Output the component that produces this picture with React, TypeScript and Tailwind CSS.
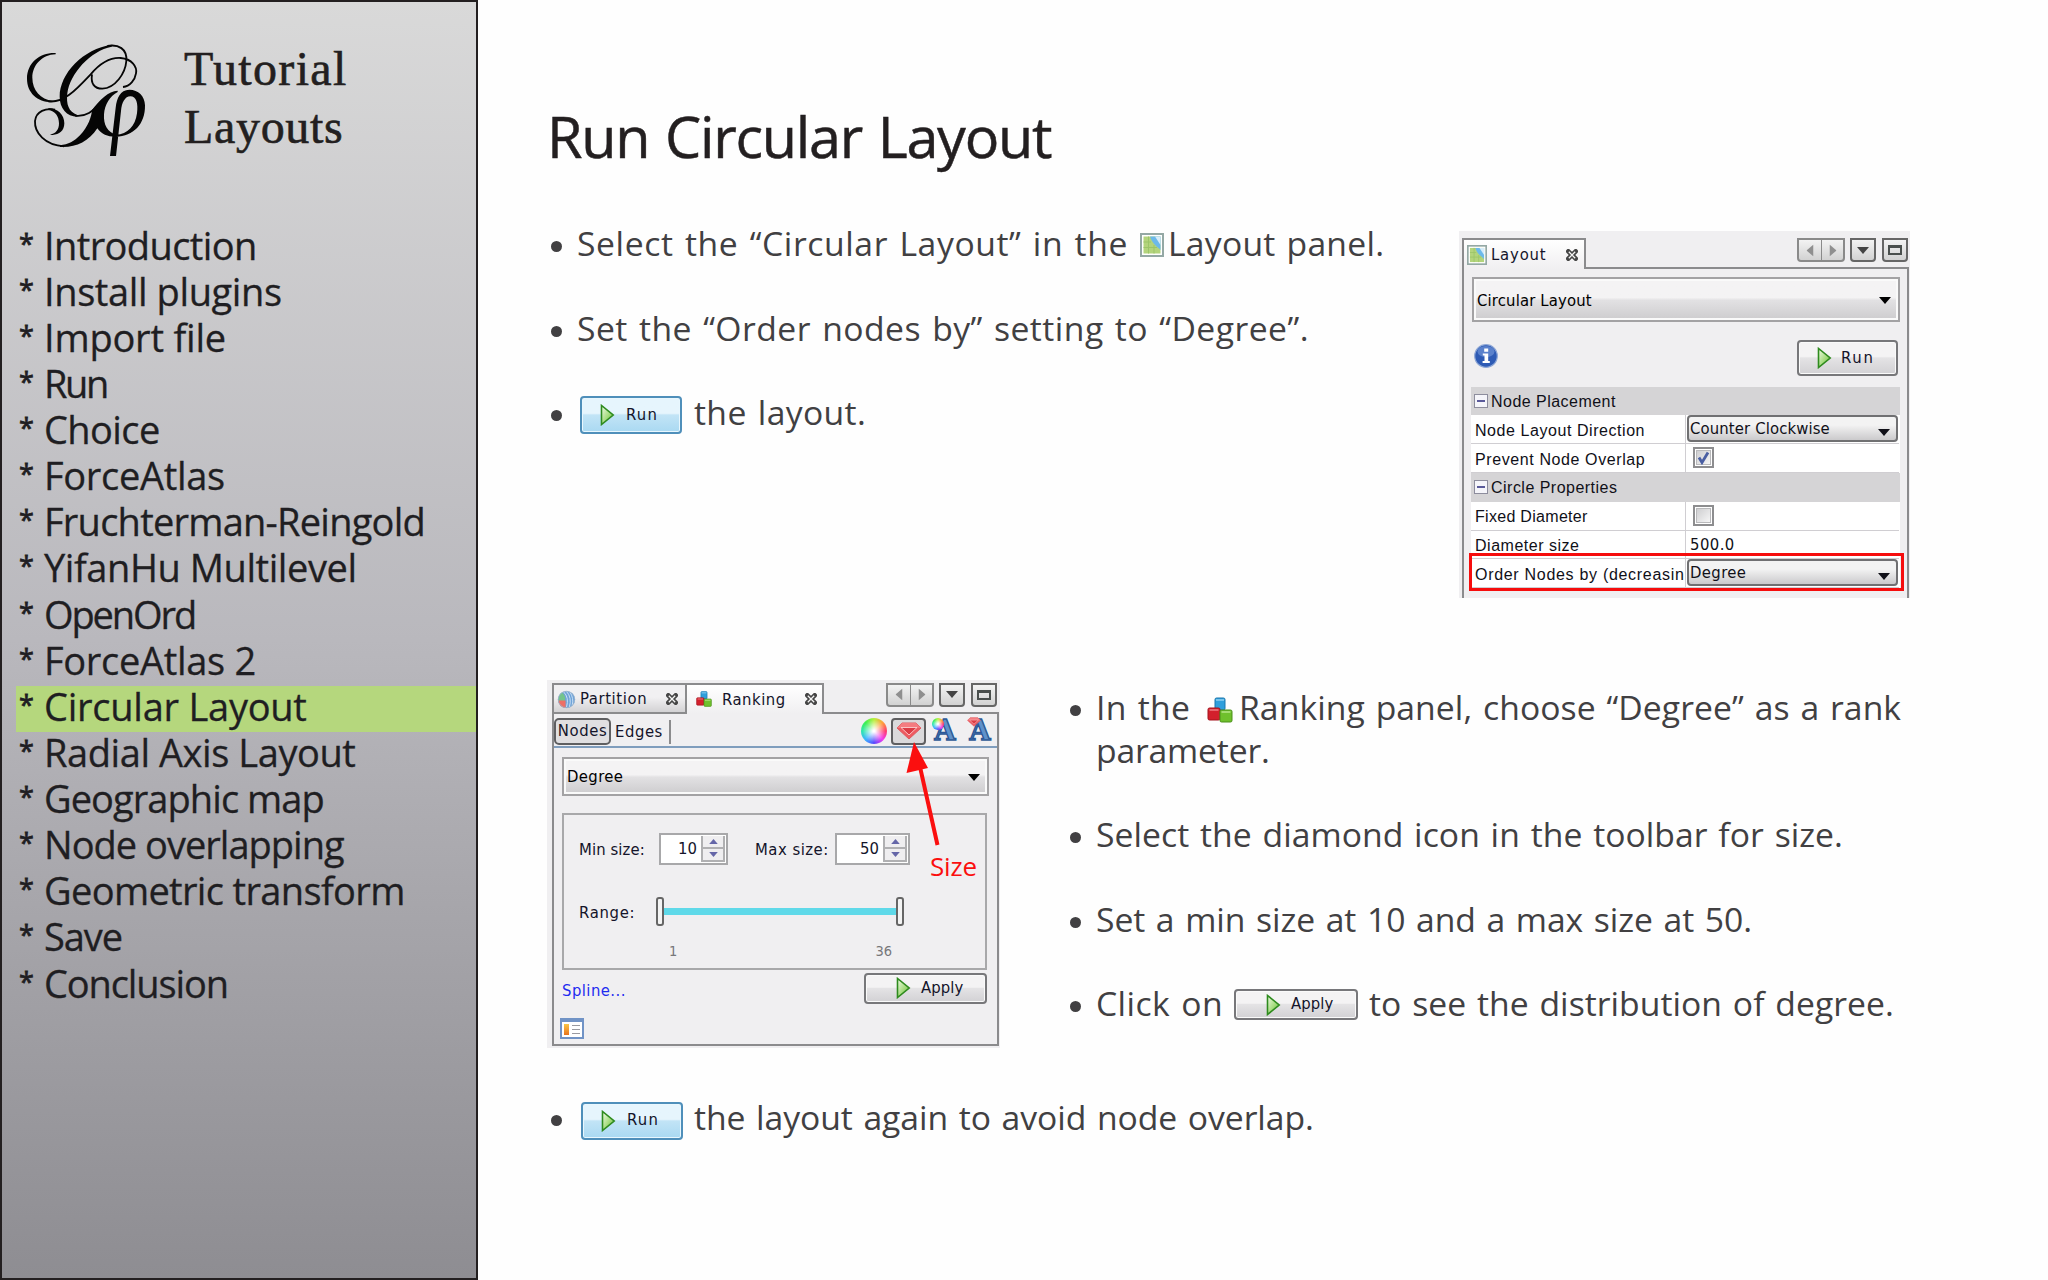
import clsx from "clsx";
import type { ReactNode } from "react";

const navItems = [
  { label: "Introduction", tracking: "tracking-[-0.6px]" },
  { label: "Install plugins", tracking: "tracking-[-0.39px]" },
  { label: "Import file", tracking: "tracking-[-0.2px]" },
  { label: "Run", tracking: "tracking-[-2.4px]" },
  { label: "Choice", tracking: "tracking-[-0.6px]" },
  { label: "ForceAtlas", tracking: "tracking-[-0.3px]" },
  { label: "Fruchterman-Reingold", tracking: "tracking-[-0.76px]" },
  { label: "YifanHu Multilevel", tracking: "tracking-[-0.43px]" },
  { label: "OpenOrd", tracking: "tracking-[-2.1px]" },
  { label: "ForceAtlas 2", tracking: "tracking-[-0.3px]" },
  { label: "Circular Layout", tracking: "tracking-[-0.25px]", active: true },
  { label: "Radial Axis Layout", tracking: "tracking-[-0.43px]" },
  { label: "Geographic map", tracking: "tracking-[-0.93px]" },
  { label: "Node overlapping", tracking: "tracking-[-0.98px]" },
  { label: "Geometric transform", tracking: "tracking-[-0.65px]" },
  { label: "Save", tracking: "tracking-[-1.1px]" },
  { label: "Conclusion", tracking: "tracking-[-1.12px]" },
];

function GephiLogo() {
  return (
    <svg viewBox="0 0 420 390" className="h-[130px] w-[140px] shrink-0">
      <g fill="#050505">
        <path d="M107 51C60 49 21 80 21 128C21 172 55 200 98 198L98 194C62 190 37 163 37 125C37 88 66 56 107 55Z" />
        <path d="M275 26C190 38 119 112 119 182C119 216 140 242 172 242L172 237C146 228 138 205 142 172C150 112 212 44 275 32Z" />
        <path d="M293 164C265 166 240 190 216 222C215 240 205 272 180 298C163 316 145 326 120 328L120 333C165 336 205 318 232 277C245 296 265 303 290 302L290 296C262 291 250 265 252 235C254 205 270 180 293 168Z" />
        <path d="M85 217C110 215 133 235 133 262C133 287 113 300 90 296C108 293 117 280 117 262C117 240 105 225 85 222Z" />
        <path d="M270 360L288 360L303 225C305 200 315 181 331 181C349 181 355 202 351 232C346 270 323 295 288 297L288 302C340 301 376 265 375 208C374 180 355 161 328 161C300 162 291 185 287 215Z" />
      </g>
      <g fill="none" stroke="#050505" strokeWidth="5.500">
        <path d="M85 196C130 202 165 165 212 115C240 82 270 64 302 66C336 69 352 92 348 112C345 132 330 151 309 153" />
        <path d="M262 30C295 24 322 38 319 75C316 112 286 156 247 158C222 158 212 142 216 115" />
        <path d="M165 239C200 243 217 226 240 203" />
        <path d="M132 331C75 328 43 290 45 255C48 225 78 215 105 221" />
      </g>
    </svg>
  );
}

function PlayIcon({ className }: { className?: string }) {
  return (
    <svg viewBox="0 0 15 22" className={clsx("h-[22px] w-[15px] shrink-0", className)}>
      <defs>
        <linearGradient id="play" x1="0" x2="1" y1="0" y2="1">
          <stop offset="0" stopColor="#f2fbe9" />
          <stop offset="0.55" stopColor="#a5dc7d" />
          <stop offset="1" stopColor="#5cb531" />
        </linearGradient>
      </defs>
      <path d="M1.5 1.5V20.5L13.2 11Z" fill="url(#play)" stroke="#2e8b1e" strokeWidth="1.6" />
    </svg>
  );
}

function MapIcon({ className }: { className?: string }) {
  return (
    <svg viewBox="0 0 24 24" className={clsx("shrink-0", className)}>
      <rect x="1" y="1" width="22" height="22" fill="#fff" stroke="#94a8a4" strokeWidth="2" />
      <rect x="3.5" y="3.5" width="17" height="17" fill="#b3d47c" />
      <path d="M10 3.5H20.5V17C18 14 12 11 10 3.5Z" fill="#6cb9ea" />
      <path d="M15 3.5H20.5V12Z" fill="#d6ecf9" />
      <path d="M3.5 9H11M3.5 14.5H17M8.5 3.5V20.5M14 12V20.5" stroke="#9cc569" fill="none" />
    </svg>
  );
}

function CubesIcon({ className }: { className?: string }) {
  return (
    <svg viewBox="0 0 26 26" className={clsx("shrink-0", className)}>
      <rect x="8" y="1" width="10" height="12" rx="1.5" fill="#2f9fdc" stroke="#1b77ad" />
      <path d="M9 3H17" stroke="#8fd0f2" strokeWidth="1.5" />
      <rect x="1" y="11" width="12" height="12" rx="1.5" fill="#d3202c" stroke="#a3131d" />
      <path d="M2.500 13H11.500" stroke="#ef7d83" strokeWidth="1.5" />
      <rect x="13" y="13" width="12" height="12" rx="1.5" fill="#6fc02c" stroke="#4a8f19" />
      <path d="M14.500 15H23.500" stroke="#b6e487" strokeWidth="1.5" />
    </svg>
  );
}

function PartitionIcon() {
  return (
    <svg viewBox="0 0 20 20" className="size-[19px] shrink-0">
      <circle cx="10" cy="10" r="9" fill="#6fa3d8" />
      <path d="M8 12L4 16A9 9 0 0 1 5 2.500Q10 6 8 12Z" fill="#74c48c" />
      <path d="M9 11V19A9 9 0 0 1 1.300 11Z" fill="#ee6f66" />
      <path d="M7 2Q13 8 10 18M10 1.500Q16 8 13 18M13.500 2Q18 9 16 16" stroke="#cfe2f4" strokeWidth="1" fill="none" />
      <circle cx="10" cy="10" r="8.700" fill="none" stroke="#9fb4c9" strokeWidth="0.8" />
    </svg>
  );
}

function CloseIcon() {
  return (
    <svg viewBox="0 0 12 12" className="size-[12px] shrink-0">
      <path d="M2.300 2.300L9.700 9.700M9.700 2.300L2.300 9.700" stroke="#454545" strokeWidth="4.600" strokeLinecap="round" />
      <path d="M2.800 2.800L9.200 9.200M9.200 2.800L2.800 9.200" stroke="#f4f4f4" strokeWidth="1.300" />
    </svg>
  );
}

function Diamond({ className }: { className?: string }) {
  return (
    <svg viewBox="0 0 26 18" className={clsx("shrink-0", className)}>
      <path d="M6 1H20L25 6L13 17L1 6Z" fill="#ee5a60" stroke="#dd5a60" />
      <path d="M6 1H20L25 6H1Z" fill="#f47c80" />
      <path d="M5 5.500H21L13 13Z" fill="#dc3c45" stroke="#fbd0d0" strokeWidth="0.9" />
    </svg>
  );
}

function ColorWheel({ className }: { className?: string }) {
  return (
    <div
      className={clsx(
        "shrink-0 rounded-full bg-[radial-gradient(circle,#fff_5%,transparent_62%),conic-gradient(from_0deg,#b8f03c,#ffa23c,#ff3c6e,#f03cf0,#5a4cff,#3cb4ff,#2ee6b0,#3cf050,#b8f03c)]",
        className,
      )}
    />
  );
}

function LetterA() {
  return (
    <svg viewBox="0 0 26 24" className="h-[24px] w-[26px] overflow-visible">
      <text
        x="13"
        y="21.500"
        textAnchor="middle"
        fontFamily="DejaVu Serif"
        fontWeight="bold"
        fontSize="27"
        fill="#5f92cb"
        stroke="#2d5896"
        strokeWidth="1.4"
      >
        A
      </text>
    </svg>
  );
}

function ArrowDown({ className }: { className?: string }) {
  return (
    <svg viewBox="0 0 12 7" className={clsx("h-[7px] w-[12px] shrink-0", className)}>
      <path d="M0 0H12L6 7Z" fill="currentColor" />
    </svg>
  );
}

function WindowButtons() {
  return (
    <div className="flex h-[24px] gap-[5px] text-[#444]">
      <div className="flex w-[48px] rounded-b-[4px] border-2 border-[#8a8a8a] bg-linear-to-b from-[#f3f3f3] to-[#d2d2d2] text-[#8f8f8f]">
        <div className="flex w-[22px] items-center justify-center">
          <ArrowDown className="rotate-90" />
        </div>
        <div className="flex flex-1 items-center justify-center border-l border-[#8a8a8a]">
          <ArrowDown className="-rotate-90" />
        </div>
      </div>
      <div className="flex w-[26px] items-center justify-center rounded-b-[4px] border-2 border-[#666] bg-linear-to-b from-[#f3f3f3] to-[#d2d2d2]">
        <ArrowDown />
      </div>
      <div className="ml-px flex w-[26px] items-center justify-center rounded-b-[4px] border-2 border-[#666] bg-linear-to-b from-[#f3f3f3] to-[#d2d2d2]">
        <div className="h-[10px] w-[14px] border-2 border-t-[3px] border-[#4a4f4d]" />
      </div>
    </div>
  );
}

function ActionButton({
  label,
  className,
  tracking,
  blue,
}: {
  label: string;
  className: string;
  tracking: string;
  blue?: boolean;
}) {
  return (
    <div
      className={clsx(
        "flex shrink-0 items-center rounded-[4px] border-2 font-['DejaVu_Sans_Condensed'] text-[16.5px] leading-none text-[#14142a]",
        blue
          ? "border-[#4f8fba] bg-linear-to-b from-[#e6f5fd] from-45% via-[#c2e4f6] via-50% to-[#a9d9f2] shadow-[inset_0_0_0_1px_#e8f7fe]"
          : "border-[#77777a] bg-linear-to-b from-[#f4f3f4] from-45% via-[#e4e3e5] via-50% to-[#d2d1d4] shadow-[inset_0_0_0_1px_#fafafa]",
        className,
      )}
    >
      <PlayIcon />
      <span className={tracking}>{label}</span>
    </div>
  );
}

function ComboBox({ label, className, tracking }: { label: string; className: string; tracking: string }) {
  return (
    <div
      className={clsx(
        "flex items-center justify-between border-2 border-[#a3a2a4] bg-linear-to-b from-[#f4f3f4] from-45% via-[#e2e1e3] via-52% to-[#cdccce] pr-[7px] pl-[3px] text-black shadow-[inset_0_0_0_2px_#fafafa]",
        className,
      )}
    >
      <span className={clsx("pt-[2px]", tracking)}>{label}</span>
      <ArrowDown className="mt-[2px]" />
    </div>
  );
}

function CellSelect({ label, tracking }: { label: string; tracking: string }) {
  return (
    <div className="ml-px flex h-[27px] w-[211px] items-start justify-between rounded-[4px] border-2 border-[#707072] bg-linear-to-b from-[#f3f3f3] from-35% to-[#cbcacc] pr-[6px] pl-px font-['DejaVu_Sans_Condensed'] text-[16.5px] leading-[23px]">
      <span className={tracking}>{label}</span>
      <ArrowDown className="mt-[12px]" />
    </div>
  );
}

function Checkbox({ checked }: { checked?: boolean }) {
  return (
    <div className="mt-[3px] ml-[7px] flex size-[21px] items-center justify-center border-2 border-[#8d8d8f] bg-white">
      <div className="flex size-[15px] items-center justify-center border border-[#b9b9bb] bg-linear-to-br from-[#cfcfd1] to-[#f6f6f6]">
        {checked && (
          <svg viewBox="0 0 13 14" className="h-[14px] w-[13px]">
            <path d="M2 6.500L5 11.500L11 1.500" fill="none" stroke="#4a5fa3" strokeWidth="2.800" />
          </svg>
        )}
      </div>
    </div>
  );
}

function GroupRow({ label, tracking, className }: { label: string; tracking: string; className: string }) {
  return (
    <div className={clsx("flex items-center bg-[#d5d4d6] pl-[3px]", className)}>
      <div className="mr-[3px] flex size-[14px] items-center justify-center border border-[#8d8d9d] bg-[#f5f5fa]">
        <div className="h-[2px] w-[8px] bg-[#5a5a9a]" />
      </div>
      <span className={tracking}>{label}</span>
    </div>
  );
}

function PropertyRow({ label, tracking, children }: { label: string; tracking: string; children: ReactNode }) {
  return (
    <div className="flex h-[28.750px] bg-white">
      <div className="flex w-[215px] shrink-0 items-center overflow-hidden border-r border-b border-[#d0ced2] pt-[3px] pl-[4px] whitespace-nowrap">
        <span className={tracking}>{label}</span>
      </div>
      <div className="w-[213px] border-b border-[#d0ced2]">{children}</div>
    </div>
  );
}

function LayoutPanel() {
  return (
    <div className="relative mt-[9px] flex h-[367px] w-[451px] shrink-0 flex-col bg-[#f0eff1] pt-[7px] pr-px pl-[3px] font-['DejaVu_Sans_Condensed'] text-[16.5px] leading-none text-[#14142a] [word-spacing:0px]">
      <div className="flex h-[31px]">
        <div className="flex w-[124px] shrink-0 items-center border-2 border-b-0 border-[#8b8b8d] bg-linear-to-b from-white to-[#f0eff1] pl-[3px]">
          <MapIcon className="size-[20px]" />
          <span className="ml-[4px] w-[75px] tracking-[0.84px]">Layout</span>
          <CloseIcon />
        </div>
        <div className="flex flex-1 justify-end border-b-2 border-[#8b8b8d] pr-px">
          <WindowButtons />
        </div>
      </div>
      <div className="flex flex-1 flex-col border-r-2 border-l-2 border-[#8b8b8d]">
        <ComboBox label="Circular Layout" tracking="tracking-[0.17px]" className="mt-[8px] ml-[8px] h-[45px] w-[428px]" />
        <div className="mt-[18px] flex h-[36px] justify-between pr-[9px] pl-[10px]">
          <svg viewBox="0 0 24 24" className="mt-[4px] size-[24px]">
            <circle cx="12" cy="12" r="11.300" fill="#2e5bb5" stroke="#8ea7d6" strokeWidth="1.2" />
            <ellipse cx="12" cy="7.500" rx="8.500" ry="5.500" fill="#6d92d6" opacity="0.7" />
            <path d="M10.200 4.500h4v3.200h-4zM8.800 9.500h5.400v7.500h1.600v2H8.600v-2h1.900v-5.500H8.800z" fill="#fff" />
          </svg>
          <ActionButton label="Run" tracking="ml-[9px] tracking-[1.7px]" className="h-[36px] w-[101px] pl-[18px]" />
        </div>
        <div className="mt-[11px] ml-[7px] w-[429px] font-['Liberation_Sans'] text-[16px] leading-none text-[#101018]">
          <GroupRow label="Node Placement" tracking="pt-px tracking-[0.47px]" className="h-[28px]" />
          <PropertyRow label="Node Layout Direction" tracking="tracking-[0.56px]">
            <CellSelect label="Counter Clockwise" tracking="tracking-[0.14px]" />
          </PropertyRow>
          <PropertyRow label="Prevent Node Overlap" tracking="tracking-[0.6px]">
            <Checkbox checked />
          </PropertyRow>
          <GroupRow label="Circle Properties" tracking="pt-[2px] tracking-[0.48px]" className="h-[29px]" />
          <PropertyRow label="Fixed Diameter" tracking="tracking-[0.3px]">
            <Checkbox />
          </PropertyRow>
          <PropertyRow label="Diameter size" tracking="tracking-[0.51px]">
            <div className="pl-[4px] font-['DejaVu_Sans_Condensed'] text-[16.5px] leading-[27px] tracking-[0.45px]">500.0</div>
          </PropertyRow>
          <PropertyRow label="Order Nodes by (decreasin" tracking="tracking-[0.7px]">
            <CellSelect label="Degree" tracking="tracking-[0.38px]" />
          </PropertyRow>
        </div>
      </div>
      <div className="absolute top-[322px] left-[10px] h-[38px] w-[435px] border-3 border-[#f60d0d]" />
    </div>
  );
}

function Spinner({ value, className }: { value: string; className: string }) {
  return (
    <div className={clsx("flex h-[32px] items-center justify-end border-2 border-[#a8a8aa] bg-white pr-px", className)}>
      <span className="mr-[4px]">{value}</span>
      <div className="flex h-[26px] w-[24px] flex-col justify-between border-2 border-t-0 border-[#b0b0b2] bg-[#efeef0] text-[#6566a8]">
        <div className="flex flex-1 items-center justify-center border-b-2 border-[#b0b0b2]">
          <ArrowDown className="h-[5px]! w-[9px]! rotate-180" />
        </div>
        <div className="flex flex-1 items-center justify-center">
          <ArrowDown className="h-[5px]! w-[9px]!" />
        </div>
      </div>
    </div>
  );
}

function RankingPanel() {
  return (
    <div className="relative h-[368px] w-[453px] shrink-0 bg-[#f0eff1] pt-[3px] pr-px pl-[5px] font-['DejaVu_Sans_Condensed'] text-[16.5px] leading-none text-[#14142a] [word-spacing:0px]">
      <div className="flex h-[31px]">
        <div className="flex w-[133px] shrink-0 items-center border-2 border-r-0 border-[#8b8b8d] bg-linear-to-b from-[#f1f0f2] from-45% to-[#d3d2d4] pt-[2px] pl-[3px]">
          <PartitionIcon />
          <span className="ml-[4px] w-[86px] tracking-[0.6px]">Partition</span>
          <CloseIcon />
        </div>
        <div className="flex w-[139px] shrink-0 items-center border-2 border-b-0 border-[#8b8b8d] bg-linear-to-b from-white to-[#f0eff1] pl-[9px]">
          <CubesIcon className="size-[16px]" />
          <span className="ml-[10px] w-[83px] pt-px tracking-[0.52px]">Ranking</span>
          <CloseIcon />
        </div>
        <div className="flex flex-1 justify-end border-b-2 border-[#8b8b8d] pr-[2px]">
          <WindowButtons />
        </div>
      </div>
      <div className="h-[332px] border-2 border-t-0 border-[#8b8b8d]">
        <div className="flex h-[34px] items-start border-b-2 border-[#7f9dbd] pt-[4px]">
          <div className="flex h-[27px] w-[57px] items-center justify-center rounded-[5px] border-2 border-[#5f5f61] bg-[#e0dfe1] tracking-[0.6px]">
            Nodes
          </div>
          <span className="ml-[4px] w-[54px] leading-[27px] tracking-[0.55px]">Edges</span>
          <div className="mt-[2px] h-[24px] w-[2px] bg-[#8b8b8d]" />
          <ColorWheel className="ml-[190px] size-[26px]" />
          <div className="ml-[4px] flex h-[27px] w-[35px] items-center justify-center rounded-[4px] border-2 border-[#5f5f61] bg-[#dad9db]">
            <Diamond className="h-[18px] w-[26px]" />
          </div>
          <div className="relative ml-[6px]">
            <LetterA />
            <ColorWheel className="absolute top-0 left-0 size-[12px]" />
          </div>
          <div className="relative ml-[9px]">
            <LetterA />
            <Diamond className="absolute -top-px left-0 h-[10px] w-[14px]" />
          </div>
        </div>
        <ComboBox label="Degree" tracking="tracking-[0.38px]" className="mt-[9px] ml-[8px] h-[39px] w-[427px]" />
        <div className="mt-[17px] ml-[8px] h-[157px] w-[425px] border-2 border-[#a8a8aa]">
          <div className="mt-[18px] ml-[15px] flex h-[32px] items-center [&>span]:pt-[2px]">
            <span className="w-[80px] tracking-[0.1px]">Min size:</span>
            <Spinner value="10" className="w-[69px]" />
            <span className="ml-[27px] w-[80px] tracking-[0.5px]">Max size:</span>
            <Spinner value="50" className="w-[75px]" />
          </div>
          <div className="mt-[32px] ml-[15px] flex h-[30px] items-center">
            <span className="w-[77px] pt-[2px] tracking-[0.7px]">Range:</span>
            <div className="h-[29px] w-[8px] rounded-[3px] border-2 border-[#666] bg-[#f4f4f4]" />
            <div className="h-[7px] w-[232px] bg-[#5fd9e9]" />
            <div className="h-[29px] w-[8px] rounded-[3px] border-2 border-[#666] bg-[#f4f4f4]" />
          </div>
          <div className="mt-[17px] ml-[105px] flex w-[223px] justify-between text-[14.500px] text-[#77777a]">
            <span>1</span>
            <span>36</span>
          </div>
        </div>
        <div className="mt-[3px] flex h-[30px] justify-between pr-[10px] pl-[8px]">
          <span className="leading-[36px] tracking-[0.45px] text-[#1f2cf0]">Spline...</span>
          <ActionButton label="Apply" tracking="ml-[10px] tracking-[0.1px]" className="h-[31px] w-[123px] pl-[30px]" />
        </div>
        <div className="mt-[15px] ml-[6px] flex h-[21px] w-[24px] gap-[3px] border-2 border-t-4 border-[#7193c6] bg-white p-[2px]">
          <div className="w-[5px] bg-linear-to-b from-[#f9c646] to-[#e8731c]" />
          <div className="flex flex-1 flex-col justify-between py-px">
            <div className="h-px bg-[#9a9aa0]" />
            <div className="h-px bg-[#9a9aa0]" />
            <div className="h-px bg-[#9a9aa0]" />
          </div>
        </div>
      </div>
      {/* callout pointing at the size toggle */}
      <svg viewBox="0 0 40 110" className="absolute top-[60px] left-[357px] h-[110px] w-[40px]">
        <path d="M14 18L33.500 105" stroke="#fb0f0f" strokeWidth="4" />
        <path d="M10 2L2.500 33L24 28Z" fill="#fb0f0f" />
      </svg>
      <span className="absolute top-[168px] left-[383px] font-['Open_Sans'] text-[26px] leading-[36px] tracking-[-0.2px] text-[#fb0f0f]">
        Size
      </span>
    </div>
  );
}

function Bullet({ children, className }: { children: ReactNode; className?: string }) {
  return (
    <li className={clsx("flex items-start", className ?? "h-[84.500px]")}>
      <span className="mt-[19px] mr-[15px] ml-[4px] size-[11px] shrink-0 rounded-full bg-[#414042]" />
      {children}
    </li>
  );
}

function Sidebar() {
  return (
    <aside className="h-[1280px] w-[478px] shrink-0 border-2 border-[#231f20] bg-linear-to-b from-[#d9d9d9] via-[#b9b8bd] via-50% to-[#8e8d92] text-[#1f1e22]">
      <header className="flex pt-[34px] pl-[18px]">
        <GephiLogo />
        <div className="mt-[4px] ml-[24px] font-['Liberation_Serif'] text-[48px] leading-[58px] text-[#231f20] [-webkit-text-stroke:0.6px_#231f20]">
          <p className="tracking-[1.34px]">Tutorial</p>
          <p className="tracking-[0.67px]">Layouts</p>
        </div>
      </header>
      <ul className="mt-[58.500px] pl-[14px] text-[38px] leading-[40px] [-webkit-text-stroke:0.3px_#1f1e22]">
        {navItems.map((item) => (
          <li key={item.label} className={clsx("flex h-[46.130px] items-start pl-[3px]", item.active && "bg-[#b5d77d]")}>
            <span className="w-[25px] text-[27px] leading-[37px] [-webkit-text-stroke:0.8px_#1f1e22]">*</span>
            <span className={item.tracking}>{item.label}</span>
          </li>
        ))}
      </ul>
    </aside>
  );
}

export default function App() {
  return (
    <div className="flex h-[1280px] w-[2048px] overflow-hidden bg-[#fefefe] font-['Open_Sans',sans-serif]">
      <Sidebar />
      <main className="flex-1 pl-[69px] text-[33.700px] leading-[43.500px] whitespace-nowrap text-[#414042] [word-spacing:2px]">
        <h1 className="mt-[105.700px] text-[57.500px] leading-[60px] tracking-[-1.250px] text-[#231f20] [-webkit-text-stroke:0.5px_#231f20]">
          Run Circular Layout
        </h1>
        <section className="mt-[56.700px] flex h-[457.600px] items-start">
          <ul className="w-[912px] shrink-0">
            <Bullet>
              <span className="w-[563px] tracking-[0.600px]">Select the “Circular Layout” in the</span>
              <MapIcon className="mt-[11px] size-[24px]" />
              <span className="ml-[4px] tracking-[0.240px]">Layout panel.</span>
            </Bullet>
            <Bullet>
              <span className="tracking-[0.460px]">Set the “Order nodes by” setting to “Degree”.</span>
            </Bullet>
            <Bullet>
              <ActionButton blue label="Run" tracking="ml-[11px] tracking-[1.300px]" className="mt-[5px] ml-[3px] h-[38px] w-[102px] pl-[18px]" />
              <span className="ml-[12px] tracking-[0.360px]">the layout.</span>
            </Bullet>
          </ul>
          <LayoutPanel />
        </section>
        <section className="flex h-[415.700px] items-start">
          <RankingPanel />
          <ul className="mt-[6.400px] ml-[66px]">
            <Bullet className="h-[126.750px]">
              <div className="leading-[42.250px]">
                <div className="flex">
                  <span className="w-[111px] tracking-[0.300px]">In the</span>
                  <CubesIcon className="mt-[11px] size-[26px]" />
                  <span className="ml-[6px] tracking-[0.070px]">Ranking panel, choose “Degree” as a rank</span>
                </div>
                <p className="tracking-[-0.180px]">parameter.</p>
              </div>
            </Bullet>
            <Bullet>
              <span className="tracking-[0.040px]">Select the diamond icon in the toolbar for size.</span>
            </Bullet>
            <Bullet>
              <span className="tracking-[-0.070px]">Set a min size at 10 and a max size at 50.</span>
            </Bullet>
            <Bullet>
              <span className="w-[138px] tracking-[0.400px]">Click on</span>
              <ActionButton label="Apply" tracking="ml-[10px] tracking-[0.100px]" className="mt-[7px] h-[31px] w-[124px] pl-[30px]" />
              <span className="ml-[11px] tracking-[0.040px]">to see the distribution of degree.</span>
            </Bullet>
          </ul>
        </section>
        <ul>
          <Bullet>
            <ActionButton blue label="Run" tracking="ml-[11px] tracking-[1.300px]" className="mt-[6px] ml-[4px] h-[38px] w-[102px] pl-[18px]" />
            <span className="ml-[11px] tracking-[-0.060px]">the layout again to avoid node overlap.</span>
          </Bullet>
        </ul>
      </main>
    </div>
  );
}
